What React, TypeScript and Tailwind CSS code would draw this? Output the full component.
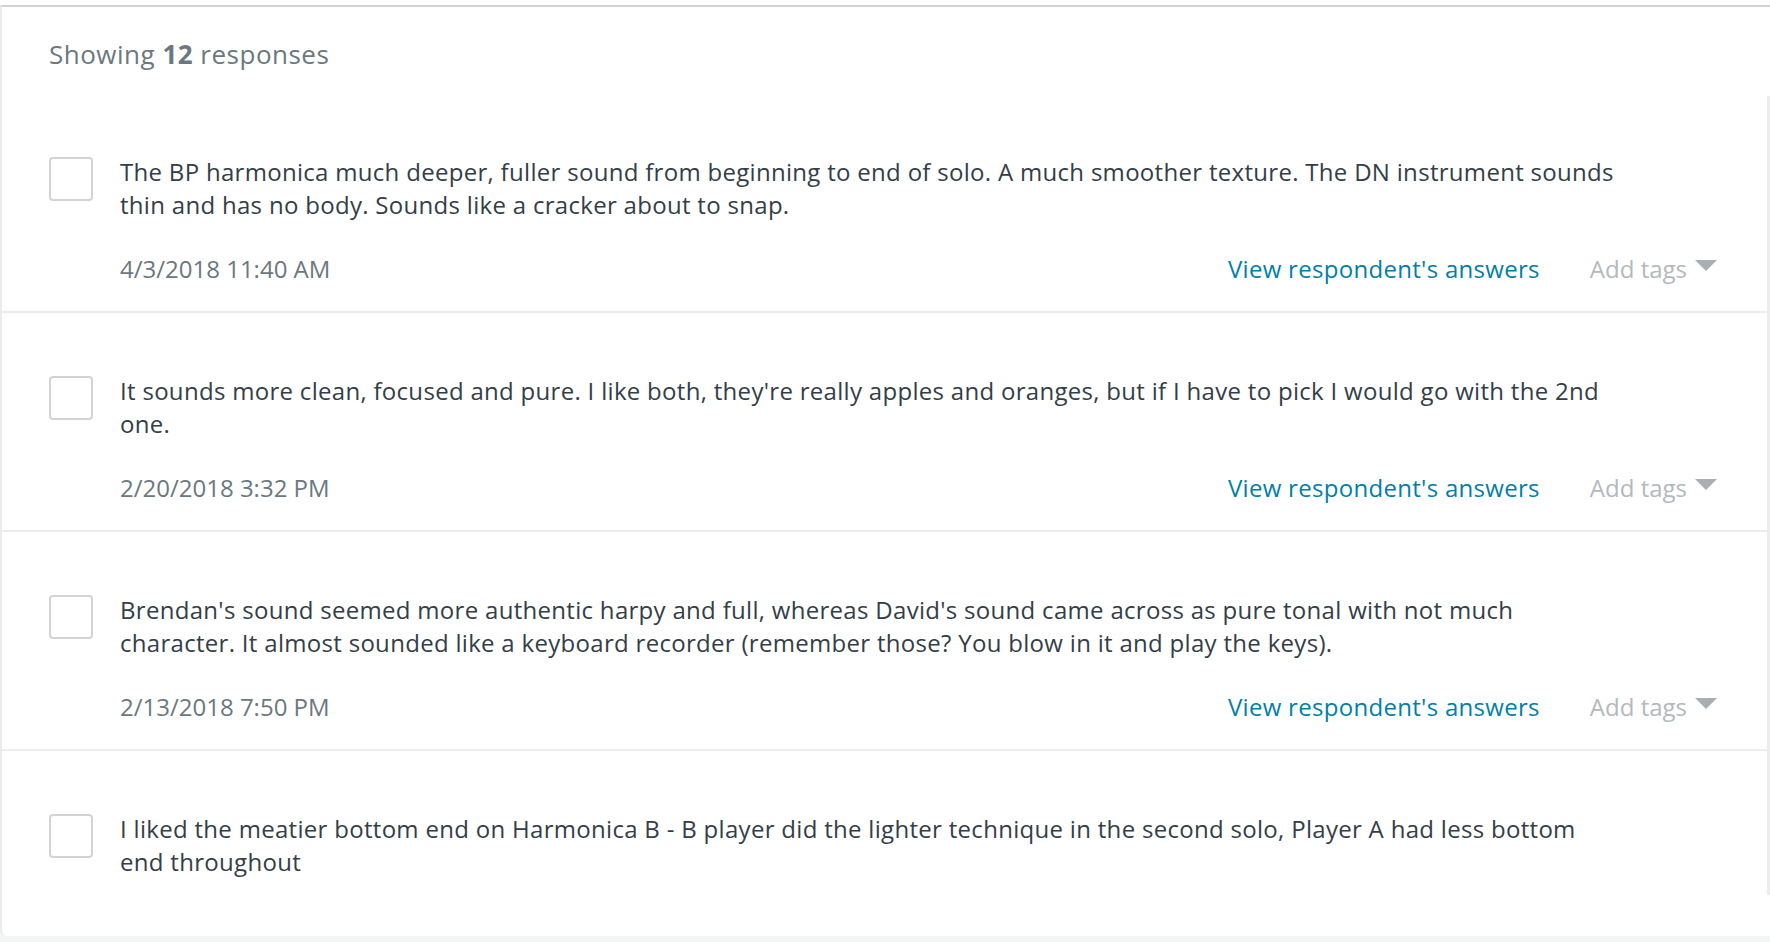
import React from 'react';

const responses = [
  {
    lines: [
      'The BP harmonica much deeper, fuller sound from beginning to end of solo. A much smoother texture. The DN instrument sounds',
      'thin and has no body. Sounds like a cracker about to snap.',
    ],
    date: '4/3/2018 11:40 AM',
  },
  {
    lines: [
      "It sounds more clean, focused and pure. I like both, they're really apples and oranges, but if I have to pick I would go with the 2nd",
      'one.',
    ],
    date: '2/20/2018 3:32 PM',
  },
  {
    lines: [
      "Brendan's sound seemed more authentic harpy and full, whereas David's sound came across as pure tonal with not much",
      'character. It almost sounded like a keyboard recorder (remember those? You blow in it and play the keys).',
    ],
    date: '2/13/2018 7:50 PM',
  },
  {
    lines: [
      'I liked the meatier bottom end on Harmonica B - B player did the lighter technique in the second solo, Player A had less bottom',
      'end throughout',
    ],
  },
];

const ResponseRow: React.FC<{ lines: string[]; date?: string; last?: boolean }> = ({ lines, date, last }) => (
  <div
    className={
      last
        ? 'h-[219px] shrink-0 flex pl-[47px] pt-[61px]'
        : 'h-[219px] shrink-0 flex pl-[47px] pt-[61px] border-b-2 border-[#ededed]'
    }
  >
    <div className="w-[44px] h-[44px] shrink-0 mt-[2px] border-2 border-[#d3d3d3] rounded-[4px] bg-white" />
    <div className="ml-[27px] flex-1 flex flex-col pr-[53px]">
      <p className="text-[24px] leading-[33px] tracking-[0.3px] text-[#333e48]">
        {lines.map((l, i) => (
          <span key={i} className="block whitespace-nowrap">
            {l}
          </span>
        ))}
      </p>
      {date && (
        <div className="mt-[31px] flex items-center justify-between">
          <span className="text-[24px] leading-[33px] text-[#6b7880]">{date}</span>
          <div className="flex items-center">
            <a className="text-[24px] leading-[33px] tracking-[0.3px] text-[#007faa] cursor-pointer">View respondent's answers</a>
            <button className="ml-[50px] flex items-center text-[24px] leading-[33px] text-[#b3b9bd]">
              Add tags
              <svg width="22" height="11" viewBox="0 0 22 11" className="ml-[8px] -mt-[6px]">
                <path d="M0 0 L22 0 L11 11 Z" fill="#a9aeb2" />
              </svg>
            </button>
          </div>
        </div>
      )}
    </div>
  </div>
);

export default function App() {
  return (
    <div
      className="w-[1770px] h-[942px] bg-[#f3f4f4] overflow-hidden flex flex-col"
      style={{ fontFamily: '"Open Sans", Roboto, sans-serif' }}
    >
      <div className="h-[5px] bg-white shrink-0" />
      <div className="h-[931px] shrink-0 bg-white border-t-2 border-l-2 border-t-[#d2d2d2] border-l-[#ebebeb] rounded-bl-[6px] flex flex-col overflow-hidden">
        <div className="h-[87px] shrink-0 pl-[47px] pt-[29px]">
          <h2 className="text-[26px] leading-[36px] tracking-[0.5px] text-[#6b7880] font-normal">
            Showing <span className="font-bold">12</span> responses
          </h2>
        </div>
        <div className="relative h-[801px] shrink-0 overflow-hidden flex flex-col">
          {responses.map((r, i) => (
            <ResponseRow key={i} lines={r.lines} date={r.date} last={i === responses.length - 1} />
          ))}
          <div className="absolute right-0 top-[2px] w-[3px] h-[799px] bg-[#ececec]" />
        </div>
      </div>
    </div>
  );
}
